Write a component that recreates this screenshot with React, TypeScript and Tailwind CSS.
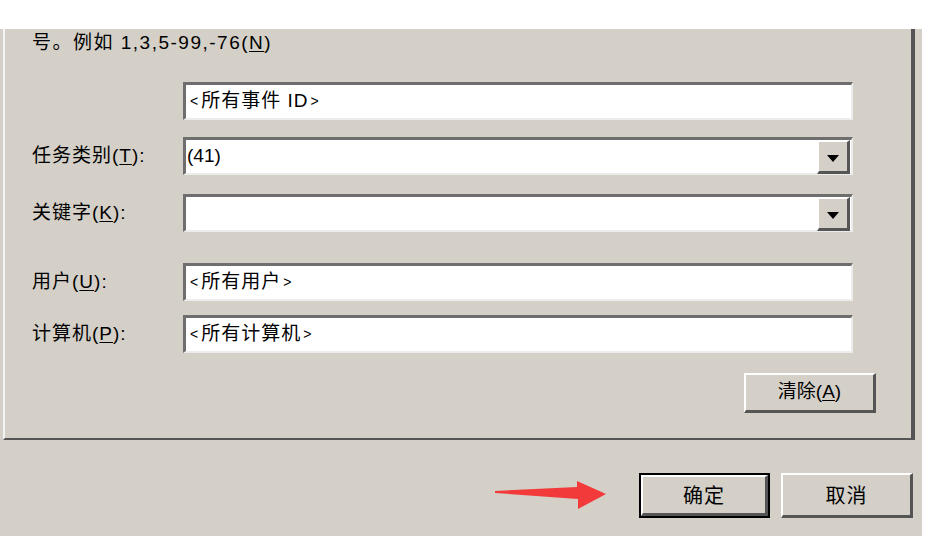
import React from 'react';

const font = { fontFamily: '"Liberation Sans", "Noto Sans CJK SC", sans-serif' };

const sunken =
  'bg-white border-t-[3px] border-l-[3px] border-r-2 border-b-2 border-t-[#6e6e6e] border-l-[#6e6e6e] border-r-[#ececec] border-b-[#ececec]';

const raised =
  'bg-[#d4d0c8] border-t-2 border-l-2 border-r-[3px] border-b-[3px] border-t-white border-l-white border-r-[#555555] border-b-[#555555]';

const Label: React.FC<{ text: string; k: string }> = ({ text, k }) => (
  <div className="w-[151px] text-[19px] tracking-[1px] text-black">
    {text}(<span className="underline underline-offset-2">{k}</span>):
  </div>
);

// angle brackets render small in the original bitmap font
const Bracketed: React.FC<{ inner: string }> = ({ inner }) => (
  <>
    <span className="text-[14px] mr-[2px]">&lt;</span>
    {inner}
    <span className="text-[14px] ml-[2px]">&gt;</span>
  </>
);

const TextBox: React.FC<{ value: string }> = ({ value }) => (
  <div className={`w-[670px] h-[38px] flex items-center pl-[4px] text-[19px] tracking-[1px] text-black ${sunken}`}>
    <Bracketed inner={value} />
  </div>
);

const Combo: React.FC<{ value: string }> = ({ value }) => (
  <div className={`w-[670px] h-[38px] flex items-center ${sunken}`}>
    <div className="flex-1 pl-[1px] text-[19px] text-black">{value}</div>
    <div className={`w-[33px] h-[34px] mr-[1px] flex items-center justify-center pt-[5px] ${raised}`}>
      <svg width="12" height="7" viewBox="0 0 12 7">
        <polygon points="0,0 12,0 6,7" fill="#000" />
      </svg>
    </div>
  </div>
);

export default function App() {
  return (
    <div className="w-[940px] h-[550px] bg-white flex flex-col" style={font}>
      <div className="h-[29px]" />
      <div className="w-[922px] h-[507px] bg-[#d4d0c8] flex flex-col">
        {/* tab page */}
        <div className="ml-[3px] w-[912px] h-[411px] border-l-2 border-l-[#f4f4f4] border-r-4 border-r-[#555555] border-b-2 border-b-[#555555] flex flex-col pl-[27px]">
          <div className="h-[24px] text-[19px] tracking-[1.5px] text-black">
            号。例如 1,3,5-99,-76(<span className="underline underline-offset-2">N</span>)
          </div>
          <div className="mt-[29px] flex">
            <div className="w-[151px]" />
            <TextBox value="所有事件 ID" />
          </div>
          <div className="mt-[17px] flex items-center">
            <Label text="任务类别" k="T" />
            <Combo value="(41)" />
          </div>
          <div className="mt-[19px] flex items-center">
            <Label text="关键字" k="K" />
            <Combo value="" />
          </div>
          <div className="mt-[31px] flex items-center">
            <Label text="用户" k="U" />
            <TextBox value="所有用户" />
          </div>
          <div className="mt-[14px] flex items-center">
            <Label text="计算机" k="P" />
            <TextBox value="所有计算机" />
          </div>
          <div className="mt-[20px] flex justify-end pr-[35px]">
            <div className={`w-[132px] h-[40px] flex items-center justify-center text-[19px] text-black ${raised}`}>
              清除(<span className="underline underline-offset-2">A</span>)
            </div>
          </div>
        </div>
        {/* bottom buttons */}
        <div className="mt-[33px] flex items-center">
          <div className="ml-[495px] w-[144px] h-[30px]">
            <svg width="112" height="30" viewBox="0 0 112 30">
              <polygon points="0,10 82,6 82,0 111,13 83,28 83,18 0,12" fill="#f23a3a" />
            </svg>
          </div>
          <div className="w-[131px] h-[45px] border-2 border-black">
            <div className={`w-full h-full flex items-center justify-center pt-[2px] text-[20px] tracking-[1px] text-black ${raised}`}>确定</div>
          </div>
          <div className={`ml-[11px] w-[132px] h-[45px] flex items-center justify-center pt-[2px] text-[20px] tracking-[1px] text-black ${raised}`}>取消</div>
        </div>
      </div>
    </div>
  );
}
